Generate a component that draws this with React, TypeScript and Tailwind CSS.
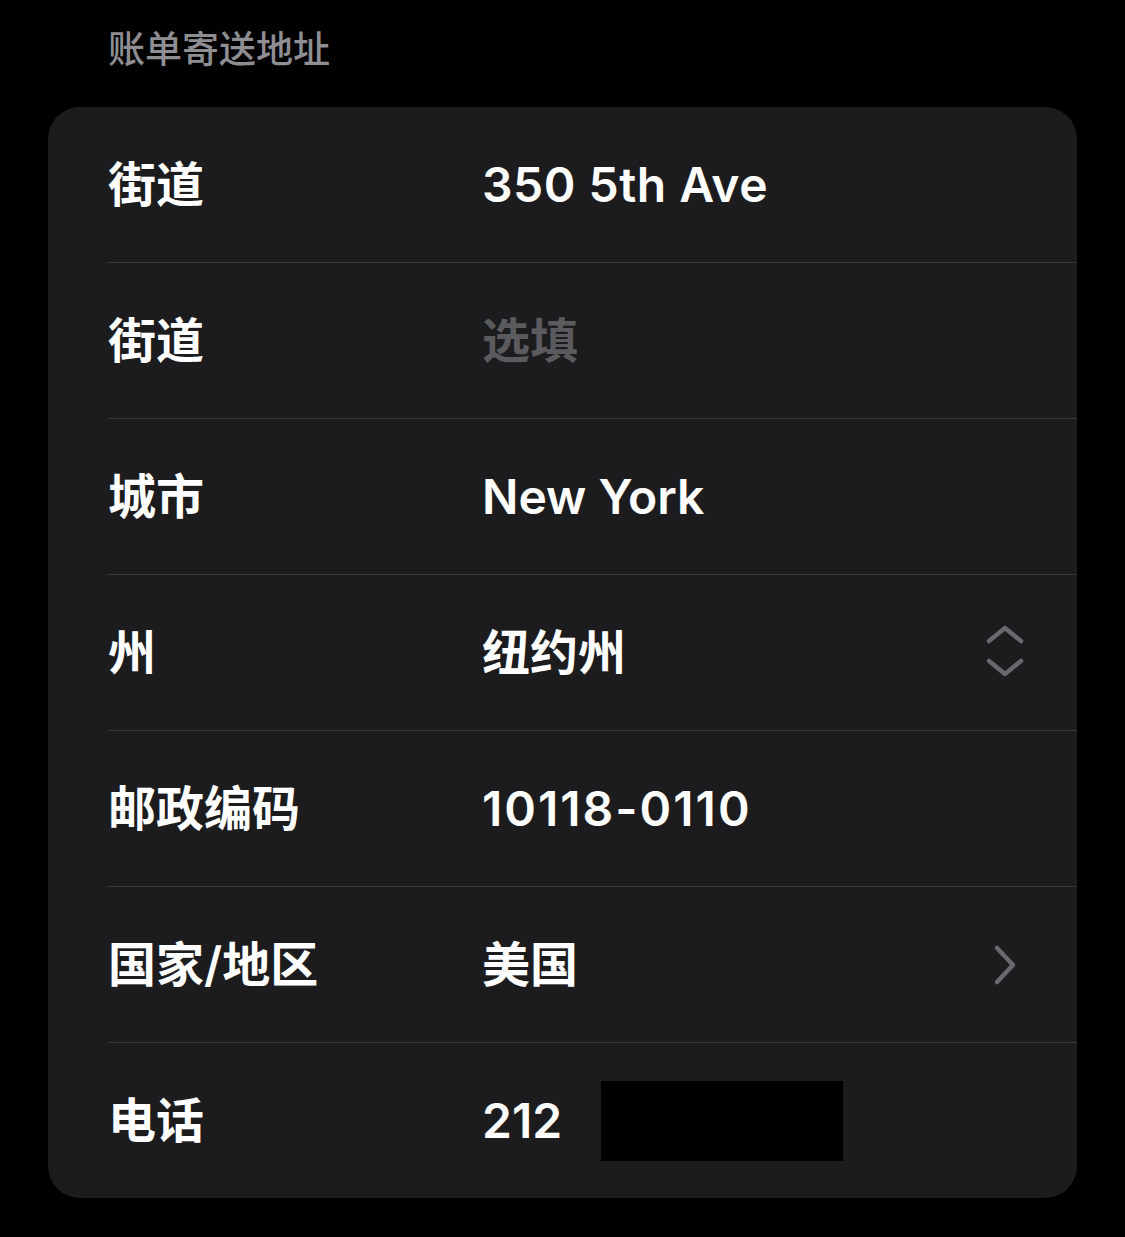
import { ReactNode } from 'react';

type Row = {
  label: string;
  value: ReactNode;
  placeholder?: boolean;
  accessory?: 'updown' | 'chevron';
  valueClass?: string;
};

const ROWS: Row[] = [
  { label: '街道', value: '350 5th Ave', valueClass: 'tracking-[0.5px]' },
  { label: '街道', value: '选填', placeholder: true },
  { label: '城市', value: 'New York' },
  { label: '州', value: '纽约州', accessory: 'updown' },
  { label: '邮政编码', value: '10118-0110', valueClass: 'tracking-[2px]' },
  { label: '国家/地区', value: '美国', accessory: 'chevron' },
  {
    label: '电话',
    value: (
      <span className="flex items-center">
        212
        <span className="ml-[39px] h-[80px] w-[242px] bg-black" />
      </span>
    ),
  },
];

function UpDown() {
  return (
    <svg width="40" height="56" viewBox="0 0 40 56" fill="none" aria-hidden>
      <path d="M4 16 L20 3 L36 16" stroke="#68686d" strokeWidth="4.5" strokeLinecap="round" strokeLinejoin="round" />
      <path d="M4 36 L20 49 L36 36" stroke="#68686d" strokeWidth="4.5" strokeLinecap="round" strokeLinejoin="round" />
    </svg>
  );
}

function Chevron() {
  return (
    <svg width="28" height="42" viewBox="0 0 28 42" fill="none" aria-hidden>
      <path d="M6 4 L22 21 L6 38" stroke="#68686d" strokeWidth="4.5" strokeLinecap="round" strokeLinejoin="round" />
    </svg>
  );
}

export default function App() {
  return (
    <div
      className="min-h-[1237px] w-full bg-black px-[48px] pt-[24px]"
      style={{ fontFamily: 'Inter, "Noto Sans CJK SC", sans-serif' }}
    >
      {/* 分组标题 */}
      <p className="pl-[60px] text-[37px] font-medium leading-[52px] text-[#8e8e93]">账单寄送地址</p>

      {/* 表单卡片 */}
      <div className="mt-[31px] overflow-hidden rounded-[32px] bg-[#1c1c1e]">
        {ROWS.map((r, i) => (
          <div key={i} className="pl-[60px]">
            {i > 0 && <div className="h-px bg-[#3a3a3c]" />}
            <div className="flex h-[155px] items-center pr-[52px]">
              <span className="w-[374px] shrink-0 text-[48px] font-semibold text-white">{r.label}</span>
              <span
                className={
                  'flex-1 text-[48px] font-semibold ' +
                  (r.placeholder ? 'text-[#5b5b5f] ' : 'text-white ') +
                  (r.valueClass ?? '')
                }
              >
                {r.value}
              </span>
              {r.accessory === 'updown' && <UpDown />}
              {r.accessory === 'chevron' && (
                <span className="mr-[6px]">
                  <Chevron />
                </span>
              )}
            </div>
          </div>
        ))}
      </div>
    </div>
  );
}
